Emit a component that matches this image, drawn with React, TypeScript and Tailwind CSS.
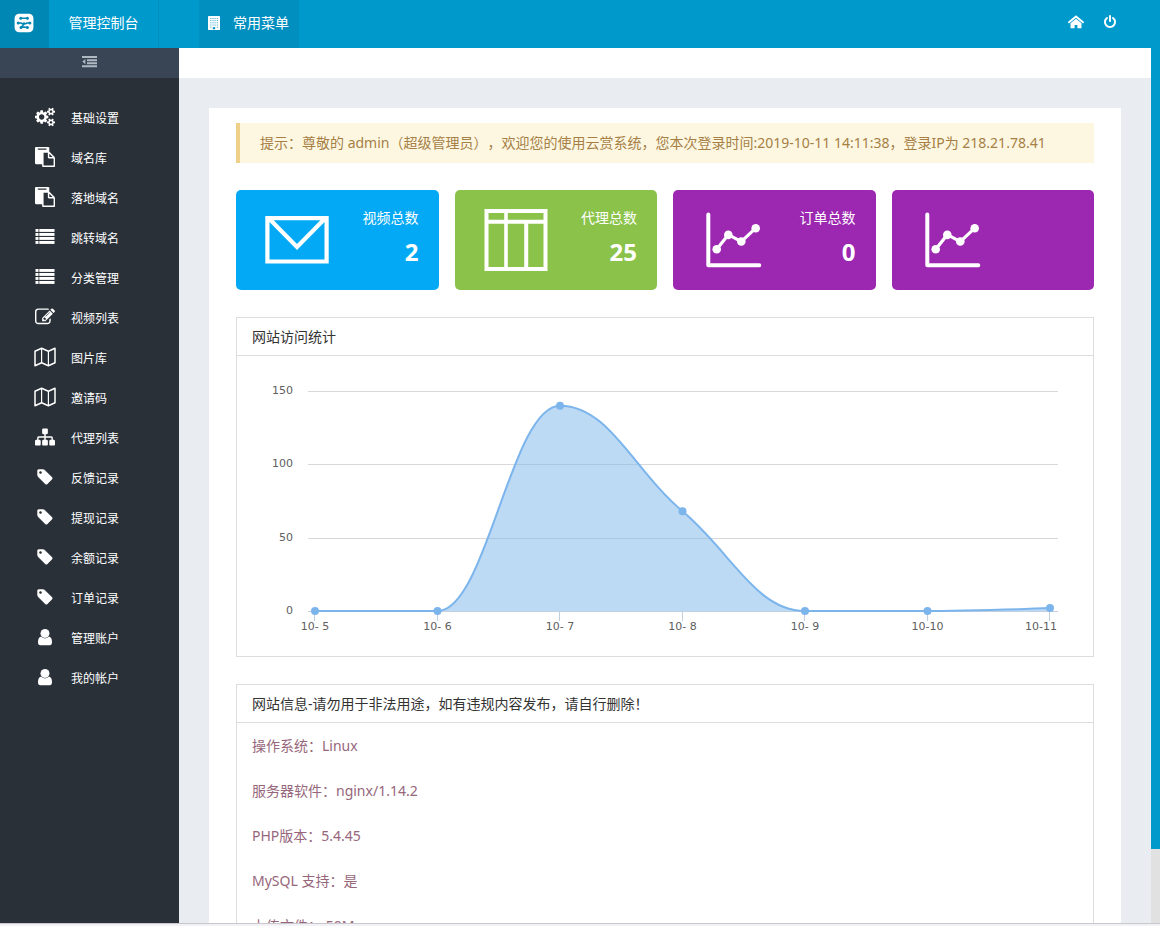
import React from "react";

type IconProps = { className?: string };

function CogsIcon({ className }: IconProps) {
  return (
    <svg viewBox="0 0 1920 1792" className={className} fill="currentColor" aria-hidden="true">
      <path d="M896 896q0-106-75-181t-181-75-181 75-75 181 75 181 181 75 181-75 75-181zm768 512q0-52-38-90t-90-38-90 38-38 90q0 53 37.5 90.5t90.5 37.5 90.5-37.5 37.5-90.5zm0-1024q0-52-38-90t-90-38-90 38-38 90q0 53 37.5 90.5t90.5 37.5 90.5-37.5 37.5-90.5zm-384 421v185q0 10-7 19.5t-16 10.5l-155 24q-11 35-32 76 34 48 90 115 7 11 7 20 0 12-7 19-23 30-82.5 89.5t-78.5 59.5q-11 0-21-7l-115-90q-37 19-77 31-11 108-23 155-7 24-30 24h-186q-11 0-20-7.5t-10-17.5l-23-153q-34-10-75-31l-118 89q-7 7-20 7-11 0-21-8-144-133-144-160 0-9 7-19 10-14 41-53t47-61q-23-44-35-82l-152-24q-10-1-17-9.5t-7-19.5v-185q0-10 7-19.5t16-10.5l155-24q11-35 32-76-34-48-90-115-7-11-7-20 0-12 7-20 22-30 82-89t79-59q11 0 21 7l115 90q34-18 77-32 11-108 23-154 7-24 30-24h186q11 0 20 7.5t10 17.5l23 153q34 10 75 31l118-89q8-7 20-7 11 0 21 8 144 133 144 160 0 8-7 19-12 16-42 54t-45 60q23 48 34 82l152 23q10 2 17 10.5t7 19.5zm640 533v140q0 16-149 31-12 27-30 52 51 113 51 138 0 4-4 7-122 71-124 71-8 0-46-47t-52-68q-20 2-30 2t-30-2q-14 21-52 68t-46 47q-2 0-124-71-4-3-4-7 0-25 51-138-18-25-30-52-149-15-149-31v-140q0-16 149-31 13-29 30-52-51-113-51-138 0-4 4-7 4-2 35-20t59-34 30-16q8 0 46 46.5t52 67.5q20-2 30-2t30 2q51-71 92-112l6-2q4 0 124 70 4 3 4 7 0 25-51 138 17 23 30 52 149 15 149 31zm0-1024v140q0 16-149 31-12 27-30 52 51 113 51 138 0 4-4 7-122 71-124 71-8 0-46-47t-52-68q-20 2-30 2t-30-2q-14 21-52 68t-46 47q-2 0-124-71-4-3-4-7 0-25 51-138-18-25-30-52-149-15-149-31v-140q0-16 149-31 13-29 30-52-51-113-51-138 0-4 4-7 4-2 35-20t59-34 30-16q8 0 46 46.5t52 67.5q20-2 30-2t30 2q51-71 92-112l6-2q4 0 124 70 4 3 4 7 0 25-51 138 17 23 30 52 149 15 149 31z" />
    </svg>
  );
}

function PasteIcon({ className }: IconProps) {
  return (
    <svg viewBox="0 0 1792 1792" className={className} fill="currentColor" aria-hidden="true">
      <path d="M768 1664h896v-640h-416q-40 0-68-28t-28-68v-416h-384v1152zm256-1440v-64q0-13-9.5-22.5t-22.5-9.5h-704q-13 0-22.5 9.5t-9.5 22.5v64q0 13 9.5 22.5t22.5 9.5h704q13 0 22.5-9.5t9.5-22.5zm256 672h299l-299-299v299zm512 128v672q0 40-28 68t-68 28h-960q-40 0-68-28t-28-68v-160h-544q-40 0-68-28t-28-68v-1344q0-40 28-68t68-28h1088q40 0 68 28t28 68v328q21 13 36 28l408 408q28 28 48 76t20 88z" />
    </svg>
  );
}

function ListIcon({ className }: IconProps) {
  return (
    <svg viewBox="0 0 20 20" className={className} fill="currentColor" aria-hidden="true">
      {[2, 6, 10, 14].map((y) => (
        <React.Fragment key={y}>
          <rect x="0.5" y={y} width="3" height="2.9" />
          <rect x="4.3" y={y} width="15.2" height="2.9" />
        </React.Fragment>
      ))}
    </svg>
  );
}

function EditIcon({ className }: IconProps) {
  return (
    <svg viewBox="0 0 1792 1792" className={className} fill="currentColor" aria-hidden="true">
      <path d="M888 1184l116-116-152-152-116 116v56h96v96h56zm440-720q-16-16-33 1l-350 350q-17 17-1 33t33-1l350-350q17-17 1-33zm80 594v190q0 119-84.5 203.5t-203.5 84.5h-832q-119 0-203.5-84.5t-84.5-203.5v-832q0-119 84.5-203.5t203.5-84.5h832q63 0 117 25 15 7 18 23 3 17-9 29l-49 49q-14 14-32 8-23-6-45-6h-832q-66 0-113 47t-47 113v832q0 66 47 113t113 47h832q66 0 113-47t47-113v-126q0-13 9-22l64-64q15-15 35-7t20 29zm-96-738l288 288-672 672h-288v-288zm444 132l-92 92-288-288 92-92q28-28 68-28t68 28l152 152q28 28 28 68t-28 68z" />
    </svg>
  );
}

function MapIcon({ className }: IconProps) {
  return (
    <svg viewBox="0 0 22 20" className={className} fill="none" stroke="currentColor" strokeLinejoin="round" aria-hidden="true">
      <path strokeWidth="1.5" d="M1 4.2 7.6 1.3 14.4 4.2 21 1.3V15.8L14.4 18.7 7.6 15.8 1 18.7Z" />
      <path strokeWidth="1.2" d="M7.6 1.3V15.8M14.4 4.2V18.7" />
    </svg>
  );
}

function SitemapIcon({ className }: IconProps) {
  return (
    <svg viewBox="0 0 1792 1792" className={className} fill="currentColor" aria-hidden="true">
      <path d="M1792 1248v320q0 40-28 68t-68 28h-320q-40 0-68-28t-28-68v-320q0-40 28-68t68-28h96v-192h-512v192h96q40 0 68 28t28 68v320q0 40-28 68t-68 28h-320q-40 0-68-28t-28-68v-320q0-40 28-68t68-28h96v-192h-512v192h96q40 0 68 28t28 68v320q0 40-28 68t-68 28h-320q-40 0-68-28t-28-68v-320q0-40 28-68t68-28h96v-192q0-52 38-90t90-38h512v-192h-96q-40 0-68-28t-28-68v-320q0-40 28-68t68-28h320q40 0 68 28t28 68v320q0 40-28 68t-68 28h-96v192h512q52 0 90 38t38 90v192h96q40 0 68 28t28 68z" />
    </svg>
  );
}

function TagIcon({ className }: IconProps) {
  return (
    <svg viewBox="0 0 1792 1792" className={className} fill="currentColor" aria-hidden="true">
      <path d="M576 448q0-53-37.5-90.5t-90.5-37.5-90.5 37.5-37.5 90.5 37.5 90.5 90.5 37.5 90.5-37.5 37.5-90.5zm1067 576q0 53-37 90l-491 492q-39 37-91 37-53 0-90-37l-715-716q-38-37-64.5-101t-26.5-117v-416q0-52 38-90t90-38h416q53 0 117 26.5t102 64.5l715 714q37 39 37 91z" />
    </svg>
  );
}

function UserIcon({ className }: IconProps) {
  return (
    <svg viewBox="0 0 20 20" className={className} fill="currentColor" aria-hidden="true">
      <circle cx="10" cy="6.4" r="4.5" />
      <path d="M6 9.6q1.7 1.8 4 1.8t4-1.8q3 .8 3 5.6 0 3-2.4 3H5.4q-2.4 0-2.4-3 0-4.8 3-5.6z" />
    </svg>
  );
}

function LogoIcon({ className }: IconProps) {
  return (
    <svg viewBox="0 0 20 20" className={className} aria-hidden="true">
      <rect x="0.6" y="0.8" width="18.8" height="18.4" rx="4.5" fill="#fff" />
      <g stroke="#0087b4" fill="#0087b4" strokeLinecap="round" strokeLinejoin="round">
        <path strokeWidth="1.5" fill="none" d="M7 5.2h6.4M4 10h3l1.4.8 1.6-.8 1.6.8L13 10h3M10.2 11l-3 3.2 2.8-.2 3.4.4" />
        <g stroke="none">
          <circle cx="6.8" cy="5.2" r="1.5" />
          <circle cx="13.4" cy="5.2" r="1.5" />
          <circle cx="4.2" cy="10" r="1.5" />
          <circle cx="15.9" cy="10" r="1.5" />
          <circle cx="7" cy="14.4" r="1.5" />
          <circle cx="13.4" cy="14.6" r="1.5" />
        </g>
      </g>
    </svg>
  );
}

function BuildingIcon({ className }: IconProps) {
  return (
    <svg viewBox="0 0 12 14" className={className} aria-hidden="true">
      <rect width="12" height="14" rx="0.4" fill="#fff" />
      <g fill="#008fbf">
        {[2, 4.2, 6.4, 8.6].map((y) =>
          [2.4, 4.6, 6.6, 8.8].map((x) => <rect key={`${x}-${y}`} x={x} y={y} width="0.9" height="0.9" />)
        )}
        <rect x="2.4" y="10.8" width="0.9" height="0.9" />
        <rect x="8.8" y="10.8" width="0.9" height="0.9" />
        <rect x="4.8" y="11.2" width="2.4" height="2" />
      </g>
    </svg>
  );
}

function HomeIcon({ className }: IconProps) {
  return (
    <svg viewBox="0 0 16 14" className={className} aria-hidden="true">
      <path d="M1 7.3 8 1.4l7 5.9" fill="none" stroke="#fff" strokeWidth="1.9" strokeLinecap="round" />
      <path d="M2.5 8.3 8 3.8l5.5 4.5v4.9H9.4V9.9H6.6v3.3H2.5Z" fill="#fff" />
    </svg>
  );
}

function PowerIcon({ className }: IconProps) {
  return (
    <svg viewBox="0 0 1792 1792" className={className} fill="currentColor" aria-hidden="true">
      <path d="M1664 896q0 156-61 298t-164 245-245 164-298 61-298-61-245-164-164-245-61-298q0-182 80.5-343t226.5-270q43-32 95.5-25t83.5 50q32 42 24.5 94.5t-49.5 84.5q-98 74-151.5 181t-53.5 228q0 104 40.5 198.5t109.5 163.5 163.5 109.5 198.5 40.5 198.5-40.5 163.5-109.5 109.5-163.5 40.5-198.5q0-121-53.5-228t-151.5-181q-42-32-49.5-84.5t24.5-94.5q31-43 84-50t95 25q146 109 226.5 270t80.5 343zm-640-768v640q0 52-38 90t-90 38-90-38-38-90v-640q0-52 38-90t90-38 90 38 38 90z" />
    </svg>
  );
}

function CollapseIcon({ className }: IconProps) {
  return (
    <svg viewBox="0 0 15 12" className={className} fill="currentColor" aria-hidden="true">
      <path d="M0 0h15v2H0zM5 3.2h10v2H5zM5 6.2h10v2H5zM0 9.3h15v2H0zM3.4 3v5.2L0.3 5.6z" />
    </svg>
  );
}

function EnvelopeIcon({ className }: IconProps) {
  return (
    <svg viewBox="0 0 66 64" className={className} fill="none" stroke="#fff" strokeWidth="4.2" aria-hidden="true">
      <path d="M3.4 11.1h59.2v43.4H3.4zM5 11.5l28 28.5 28-28.5" />
    </svg>
  );
}

function ColumnsIcon({ className }: IconProps) {
  return (
    <svg viewBox="0 0 66 64" className={className} fill="none" stroke="#fff" strokeWidth="4" aria-hidden="true">
      <path d="M3.5 4h59v58h-59zM3.5 14.7h59M43.2 14.7V62" />
      <path strokeWidth="3.6" d="M23 2v60" />
    </svg>
  );
}

function TrendIcon({ className }: IconProps) {
  return (
    <svg viewBox="0 0 66 64" className={className} fill="none" stroke="#fff" strokeWidth="4" strokeLinecap="round" strokeLinejoin="round" aria-hidden="true">
      <path d="M7.3 7.4v50.9h51" />
      <path strokeWidth="3.2" d="M15.7 42.3 27.3 27.7 40.3 34.7 54.7 21.2" />
      <g fill="#fff" stroke="none">
        <circle cx="15.7" cy="42.3" r="4.3" />
        <circle cx="27.3" cy="27.9" r="4.3" />
        <circle cx="40.3" cy="34.5" r="4.3" />
        <circle cx="54.7" cy="21.2" r="4.3" />
      </g>
    </svg>
  );
}

const menu: { label: string; Icon: React.ComponentType<IconProps>; size: string }[] = [
  { label: "基础设置", Icon: CogsIcon, size: "h-5 w-5" },
  { label: "域名库", Icon: PasteIcon, size: "h-5 w-5" },
  { label: "落地域名", Icon: PasteIcon, size: "h-5 w-5" },
  { label: "跳转域名", Icon: ListIcon, size: "h-5 w-5" },
  { label: "分类管理", Icon: ListIcon, size: "h-5 w-5" },
  { label: "视频列表", Icon: EditIcon, size: "h-5 w-5" },
  { label: "图片库", Icon: MapIcon, size: "h-5 w-[22px]" },
  { label: "邀请码", Icon: MapIcon, size: "h-5 w-[22px]" },
  { label: "代理列表", Icon: SitemapIcon, size: "h-5 w-5" },
  { label: "反馈记录", Icon: TagIcon, size: "h-[18px] w-[18px]" },
  { label: "提现记录", Icon: TagIcon, size: "h-[18px] w-[18px]" },
  { label: "余额记录", Icon: TagIcon, size: "h-[18px] w-[18px]" },
  { label: "订单记录", Icon: TagIcon, size: "h-[18px] w-[18px]" },
  { label: "管理账户", Icon: UserIcon, size: "h-5 w-5" },
  { label: "我的帐户", Icon: UserIcon, size: "h-5 w-5" },
];

const cards = [
  { label: "视频总数", value: "2", color: "bg-[#03a9f4]", Icon: EnvelopeIcon },
  { label: "代理总数", value: "25", color: "bg-[#8bc34a]", Icon: ColumnsIcon },
  { label: "订单总数", value: "0", color: "bg-[#9c27b0]", Icon: TrendIcon },
  { label: "", value: "", color: "bg-[#9c27b0]", Icon: TrendIcon },
];

const visits = [
  { day: "10- 5", count: 0 },
  { day: "10- 6", count: 0 },
  { day: "10- 7", count: 140 },
  { day: "10- 8", count: 68 },
  { day: "10- 9", count: 0 },
  { day: "10-10", count: 0 },
  { day: "10-11", count: 2 },
];

const BASE = 255;
const toY = (value: number) => BASE - (value * 220) / 150;
const points = visits.map((v, i) => ({ x: 78 + i * 122.5, y: toY(v.count) }));

// Smoothed curve whose handles never overshoot the neighbouring points.
function splinePath(pts: { x: number; y: number }[]) {
  const handles = pts.map((p, i) => {
    const prev = pts[i - 1];
    const next = pts[i + 1];
    if (!prev || !next) return { lx: p.x, ly: p.y, rx: p.x, ry: p.y };
    const lx = (1.5 * p.x + prev.x) / 2.5;
    const rx = (1.5 * p.x + next.x) / 2.5;
    let ly = (1.5 * p.y + prev.y) / 2.5;
    let ry = (1.5 * p.y + next.y) / 2.5;
    const shift = ((ry - ly) * (rx - p.x)) / (rx - lx) + p.y - ry;
    ly += shift;
    ry += shift;
    const clampL = Math.min(Math.max(ly, Math.min(prev.y, p.y)), Math.max(prev.y, p.y));
    if (clampL !== ly) {
      ly = clampL;
      ry = 2 * p.y - ly;
    }
    const clampR = Math.min(Math.max(ry, Math.min(next.y, p.y)), Math.max(next.y, p.y));
    if (clampR !== ry) {
      ry = clampR;
      ly = 2 * p.y - ry;
    }
    return { lx, ly, rx, ry };
  });
  return pts.reduce((d, p, i) => {
    if (i === 0) return `M${p.x} ${p.y}`;
    const a = handles[i - 1];
    const b = handles[i];
    return `${d}C${a.rx} ${a.ry} ${b.lx} ${b.ly} ${p.x} ${p.y}`;
  }, "");
}

const curve = splinePath(points);
const area = `${curve}L${points[points.length - 1].x} ${BASE}L${points[0].x} ${BASE}Z`;

function VisitChart() {
  return (
    <svg viewBox="0 0 856 300" className="block w-full" role="img" aria-label="网站访问统计">
      {[150, 100, 50, 0].map((tick) => (
        <g key={tick}>
          <path
            d={`M71 ${Math.round(toY(tick)) + 0.5}H821`}
            stroke={tick === 0 ? "#c0d0e0" : "#d8d8d8"}
          />
          <text x="56" y={Math.round(toY(tick)) + 3} textAnchor="end" className="fill-[#606060] font-['DejaVu_Sans',sans-serif] text-[11px]">
            {tick}
          </text>
        </g>
      ))}
      {points.map((p) => (
        <path key={p.x} d={`M${Math.ceil(p.x) - 0.5} ${BASE}V265`} stroke="#c0d0e0" />
      ))}
      <path d={area} fill="#7cb5ec" fillOpacity="0.5" />
      <path d={curve} fill="none" stroke="#7cb5ec" strokeWidth="2" strokeLinejoin="round" />
      {points.map((p, i) => (
        <g key={p.x}>
          <circle cx={p.x} cy={p.y} r="4" fill="#7cb5ec" />
          <text
            x={i === points.length - 1 ? 820 : p.x}
            y="274"
            textAnchor={i === points.length - 1 ? "end" : "middle"}
            className="fill-[#606060] font-['DejaVu_Sans',sans-serif] text-[11px]"
          >
            {visits[i].day}
          </text>
        </g>
      ))}
    </svg>
  );
}

const info = ["操作系统：Linux", "服务器软件：nginx/1.14.2", "PHP版本：5.4.45", "MySQL 支持：是", "上传文件： 50M"];

export default function App() {
  return (
    <div className="flex h-screen flex-col overflow-hidden bg-white font-['Noto_Sans','Noto_Sans_CJK_SC',sans-serif] text-sm [text-spacing-trim:space-all]">
      <header className="flex h-12 shrink-0 items-stretch bg-[#0099cc] text-white">
        <a href="#" aria-label="管理控制台" className="flex w-[49px] items-center justify-center bg-[#0087b4] pr-0.5 pb-0.5">
          <LogoIcon className="h-5 w-5" />
        </a>
        <a href="#" className="flex w-[110px] items-center justify-center border-r border-[#008fbf] pb-0.5">
          管理控制台
        </a>
        <a href="#" className="ml-10 flex w-[100px] items-center gap-[13px] bg-[#008fbf] pb-0.5 pl-[9px]">
          <BuildingIcon className="h-3.5 w-3" />
          <span>常用菜单</span>
        </a>
        <nav className="mr-[43px] ml-auto flex items-center gap-[19px] pb-1">
          <a href="#" aria-label="首页">
            <HomeIcon className="h-3.5 w-4" />
          </a>
          <a href="#" aria-label="退出">
            <PowerIcon className="h-3.5 w-3.5" />
          </a>
        </nav>
      </header>

      <div className="flex min-h-0 flex-1">
        <aside className="flex w-[179px] shrink-0 flex-col bg-[#293038] text-white">
          <button type="button" aria-label="收起菜单" className="flex h-[30px] items-center justify-center bg-[#394555] pb-[3px] text-[#aeb9c2]">
            <CollapseIcon className="h-3 w-[15px]" />
          </button>
          <nav className="flex flex-col pt-5">
            {menu.map(({ label, Icon, size }) => (
              <a key={label} href="#" className="flex h-10 items-center gap-[15px] pl-[34px] text-xs">
                <span className="flex w-[22px] justify-center pb-0.5">
                  <Icon className={size} />
                </span>
                <span className="pt-0.5">{label}</span>
              </a>
            ))}
          </nav>
        </aside>

        <main className="flex min-w-0 flex-1 flex-col">
          <div className="h-[30px] shrink-0 bg-white" />
          <div className="min-h-0 flex-1 overflow-y-auto bg-[#e9edf2] [scrollbar-width:none]">
            <div className="m-[30px] flex flex-col gap-[27px] bg-white px-[27px] pt-[15px] pb-[27px]">
              <p className="flex min-h-10 items-center border-l-4 border-[#eed088] bg-[#fdf7e2] pl-5 text-[#a67f45]">
                提示：尊敬的 admin（超级管理员），欢迎您的使用云赏系统，您本次登录时间:2019-10-11 14:11:38，登录IP为 218.21.78.41
              </p>

              <div className="grid grid-cols-4 gap-4">
                {cards.map(({ label, value, color, Icon }, i) => (
                  <div key={i} className={`flex h-[100px] justify-between rounded-[5px] pr-5 pl-7 text-white ${color}`}>
                    <Icon className="mt-[17px] h-16 w-[66px]" />
                    <div className="flex flex-col items-end pt-[17px]">
                      <span className="leading-[22px]">{label}</span>
                      <span className="mt-[7px] text-2xl leading-8 font-bold">{value}</span>
                    </div>
                  </div>
                ))}
              </div>

              <section className="border border-[#dddddd]">
                <h2 className="flex h-[38px] items-center border-b border-[#dddddd] px-[15px] text-[#333333]">网站访问统计</h2>
                <VisitChart />
              </section>

              <section className="border border-[#dddddd]">
                <h2 className="flex h-[38px] items-center border-b border-[#dddddd] px-[15px] text-[#333333]">
                  网站信息-请勿用于非法用途，如有违规内容发布，请自行删除！
                </h2>
                <ul className="px-[15px] text-[#96667b]">
                  {info.map((line) => (
                    <li key={line} className="flex h-[45px] items-center">
                      {line}
                    </li>
                  ))}
                </ul>
              </section>
            </div>
          </div>
        </main>

        <div className="flex w-[9px] shrink-0 flex-col bg-[#e1e1e1]">
          <div className="flex-[801] bg-[#0099cc]" />
          <div className="flex-[74]" />
        </div>
      </div>
      <div className="h-[3px] shrink-0 border-t border-[#c8c8cc] bg-[#f1f1f6]" />
    </div>
  );
}
